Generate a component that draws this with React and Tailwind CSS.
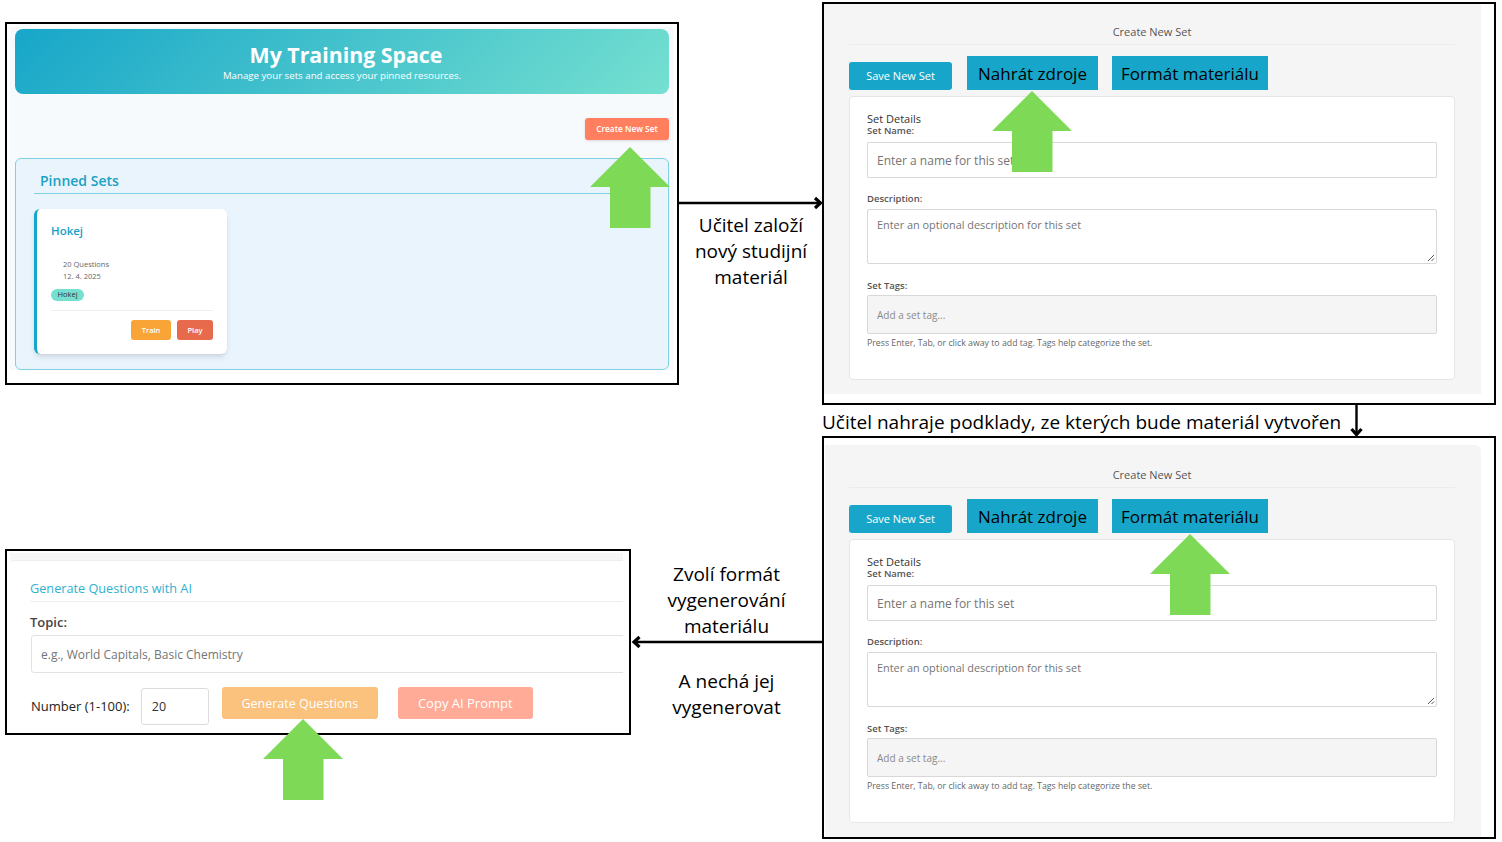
import React from 'react'

const ui = 'font-["Open_Sans",sans-serif]'
const phr = 'placeholder:text-[#757575]'

function GreenArrow({ className }) {
  return (
    <svg className={`absolute ${className}`} width="80" height="81" viewBox="0 0 80 81">
      <polygon points="40,0 80,40 60.5,40 60.5,81 20,81 20,40 0,40" fill="#7ed957" />
    </svg>
  )
}

function Note({ className, children }) {
  return <div className={`absolute text-center text-[19px] leading-[26px] text-black ${className}`}>{children}</div>
}

function SetForm({ className, innerClass }) {
  return (
    <div className={`absolute left-[822px] w-[674px] h-[403px] border-2 border-black bg-white ${className}`}>
      <div className={`bg-[#f5f5f5] pr-[26px] ${innerClass}`}>
        <div className="h-[22px] border-b border-[#ececec] text-center text-[11px] leading-[18px] text-[#555]">Create New Set</div>
        <div className="flex items-start h-[51px] pt-[11px]">
          <button className="mt-[6px] w-[103px] h-[28px] rounded-[3px] bg-[#17a6c9] text-[11px] text-white">Save New Set</button>
          <div className="ml-[15px] w-[131px] h-[34px] bg-[#17a6c9] text-center text-[17px] leading-[35px] text-black">Nahrát zdroje</div>
          <div className="ml-[14px] w-[156px] h-[34px] bg-[#17a6c9] text-center text-[17px] leading-[35px] text-black">Formát materiálu</div>
        </div>
        <div className="h-[284px] rounded-[4px] border border-[#e6e6e6] bg-white pl-[17px] pr-[17px] pt-[16px]">
          <div className="text-[11px] leading-[12px] text-[#333]">Set Details</div>
          <label className="block text-[9.5px] leading-[11px] font-semibold text-[#555]">Set Name:</label>
          <input readOnly className={`mt-[6px] block w-full h-[36px] rounded-[2px] border border-[#d8d8d8] bg-white px-[9px] pt-[1px] text-[12px] outline-none ${phr}`} placeholder="Enter a name for this set" />
          <label className="mt-[15px] block text-[9.5px] leading-[11px] font-semibold text-[#555]">Description:</label>
          <div className="relative mt-[5px] h-[55px] rounded-[2px] border border-[#d8d8d8] bg-white px-[9px] py-[8px] text-[10.9px] leading-[14px] text-[#757575]">
            Enter an optional description for this set
            <svg className="absolute right-[1px] bottom-[1px]" width="8" height="8" viewBox="0 0 8 8">
              <path d="M1 7 7 1M4.5 7 7 4.5" stroke="#555" strokeWidth="1" fill="none" />
            </svg>
          </div>
          <label className="mt-[16px] block text-[9.5px] leading-[11px] font-semibold text-[#555]">Set Tags:</label>
          <input readOnly className="mt-[4px] block w-full h-[39px] rounded-[2px] border border-[#d8d8d8] bg-[#f5f5f5] px-[9px] text-[10px] outline-none placeholder:text-[#8a8a8a]" placeholder="Add a set tag..." />
          <p className="mt-[3px] text-[8.75px] leading-[12px] text-[#666]">Press Enter, Tab, or click away to add tag. Tags help categorize the set.</p>
        </div>
      </div>
    </div>
  )
}

export default function App() {
  return (
    <div className={`relative w-[1502px] h-[842px] overflow-hidden bg-white ${ui}`}>
      {/* training space */}
      <div className="absolute left-[5px] top-[22px] w-[674px] h-[363px] border-2 border-black bg-white p-[3px]">
        <div className="h-[343px] bg-[#f7fafc] px-[5px] pt-[2px]">
          <div className="h-[65px] rounded-[8px] bg-[linear-gradient(135deg,#17a6c9,#75e0d0)] pt-[13px] text-center text-white">
            <h1 className="pl-[8px] text-[21.3px] leading-[26px] font-bold">My Training Space</h1>
            <p className="pt-[1px] text-[9.7px] leading-[13px]">Manage your sets and access your pinned resources.</p>
          </div>
          <div className="flex justify-end pt-[24px]">
            <button className="w-[84px] h-[22px] rounded-[3px] bg-[#ff7f5f] text-[8.3px] font-semibold text-white shadow-sm">Create New Set</button>
          </div>
          <div className="mt-[18px] h-[212px] rounded-[6px] border border-[#7fd0e6] bg-[#eaf4fd] pl-[18px] pr-[39px] pt-[11px]">
            <h2 className="h-[24px] border-b border-[#7fd0e6] pl-[6px] text-[14px] leading-[21px] font-semibold text-[#17a2c4]">Pinned Sets</h2>
            <div className="mt-[15px] w-[193px] h-[145px] rounded-[6px] border-l-[3px] border-[#17a6c9] bg-white pl-[14px] pr-[14px] pt-[14px] shadow-md">
              <div className="text-[11.5px] leading-[16px] font-semibold text-[#17a2c4]">Hokej</div>
              <div className="mt-[20px] pl-[12px] text-[7.5px] leading-[11.5px] text-[#666]">
                <div>20 Questions</div>
                <div>12. 4. 2025</div>
              </div>
              <span className="mt-[7px] block w-[33px] h-[12px] rounded-full bg-[#75e0d0] text-center text-[7.5px] leading-[11px] text-[#333]">Hokej</span>
              <div className="mt-[9px] flex justify-end gap-[6px] border-t border-[#eeeeee] pt-[9px]">
                <button className="w-[40px] h-[20px] rounded-[3px] bg-[#f9a437] pt-[1px] text-[7.5px] font-semibold text-white">Train</button>
                <button className="w-[36px] h-[20px] rounded-[3px] bg-[#e76a4d] pt-[1px] text-[7.5px] font-semibold text-white">Play</button>
              </div>
            </div>
          </div>
        </div>
      </div>

      <SetForm className="top-[2px]" innerClass="w-[657px] h-[390px] pl-[25px] pt-[19px]" />
      <SetForm className="top-[436px]" innerClass="mt-[7px] ml-[1px] w-[656px] h-[392px] rounded-tr-[6px] pl-[24px] pt-[21px]" />

      {/* ai generator */}
      <div className="absolute left-[5px] top-[549px] w-[626px] h-[186px] overflow-hidden border-2 border-black bg-white pl-[3px] pt-[2px]">
        <div className="w-[613px] overflow-hidden">
          <div className="h-[7px] bg-[#f7f7f7]" />
          <div className="w-[640px] rounded-tl-[4px] border-t border-[#eeeeee] pl-[20px] pt-[18px]">
            <h3 className="h-[23px] w-[593px] border-b border-[#eeeeee] text-[12.7px] leading-[18px] text-[#2fb0cf]">Generate Questions with AI</h3>
            <label className="mt-[11px] block text-[13px] leading-[18px] font-semibold text-[#444]">Topic:</label>
            <input readOnly className={`mt-[4px] ml-[1px] block w-[620px] h-[38px] rounded-[3px] border border-[#e2e2e2] bg-white px-[9px] text-[12px] outline-none ${phr}`} placeholder="e.g., World Capitals, Basic Chemistry" />
            <div className="mt-[14px] flex items-start">
              <span className="ml-[1px] mt-[10px] text-[13px] leading-[18px] text-[#222]">Number (1-100):</span>
              <div className="ml-[11px] mt-[1px] w-[68px] h-[37px] rounded-[3px] border border-[#dcdcdc] pl-[10px] text-[12.5px] leading-[36px] text-[#333]">20</div>
              <button className="ml-[13px] w-[156px] h-[32px] rounded-[3px] bg-[#fac27d] pt-[2px] text-[12.5px] text-white">Generate Questions</button>
              <button className="ml-[20px] w-[135px] h-[32px] rounded-[3px] bg-[#ffab97] pt-[1px] text-[13px] text-white">Copy AI Prompt</button>
            </div>
          </div>
        </div>
      </div>

      {/* connectors */}
      <svg className="absolute left-0 top-0" width="1502" height="842" viewBox="0 0 1502 842" fill="none" stroke="#000">
        <path d="M679 203H819" strokeWidth="2.4" />
        <path d="M815 198l5.5 5-5.5 5" strokeWidth="3.2" />
        <path d="M1356.5 404V433" strokeWidth="2.4" />
        <path d="M1351.5 429l5 5.5 5-5.5" strokeWidth="3.2" />
        <path d="M822 642H635" strokeWidth="2.4" />
        <path d="M639.5 637l-5.5 5 5.5 5" strokeWidth="3.2" />
      </svg>

      <GreenArrow className="left-[590px] top-[147px]" />
      <GreenArrow className="left-[992px] top-[91px]" />
      <GreenArrow className="left-[1150px] top-[534px]" />
      <GreenArrow className="left-[263px] top-[719px]" />

      <Note className="left-[680px] top-[212px] w-[142px]">Učitel založí<br />nový studijní<br />materiál</Note>
      <Note className="left-[822px] top-[409px] whitespace-nowrap">Učitel nahraje podklady, ze kterých bude materiál vytvořen</Note>
      <Note className="left-[640px] top-[561px] w-[173px]">Zvolí formát<br />vygenerování<br />materiálu</Note>
      <Note className="left-[640px] top-[668px] w-[173px]">A nechá jej<br />vygenerovat</Note>
    </div>
  )
}
